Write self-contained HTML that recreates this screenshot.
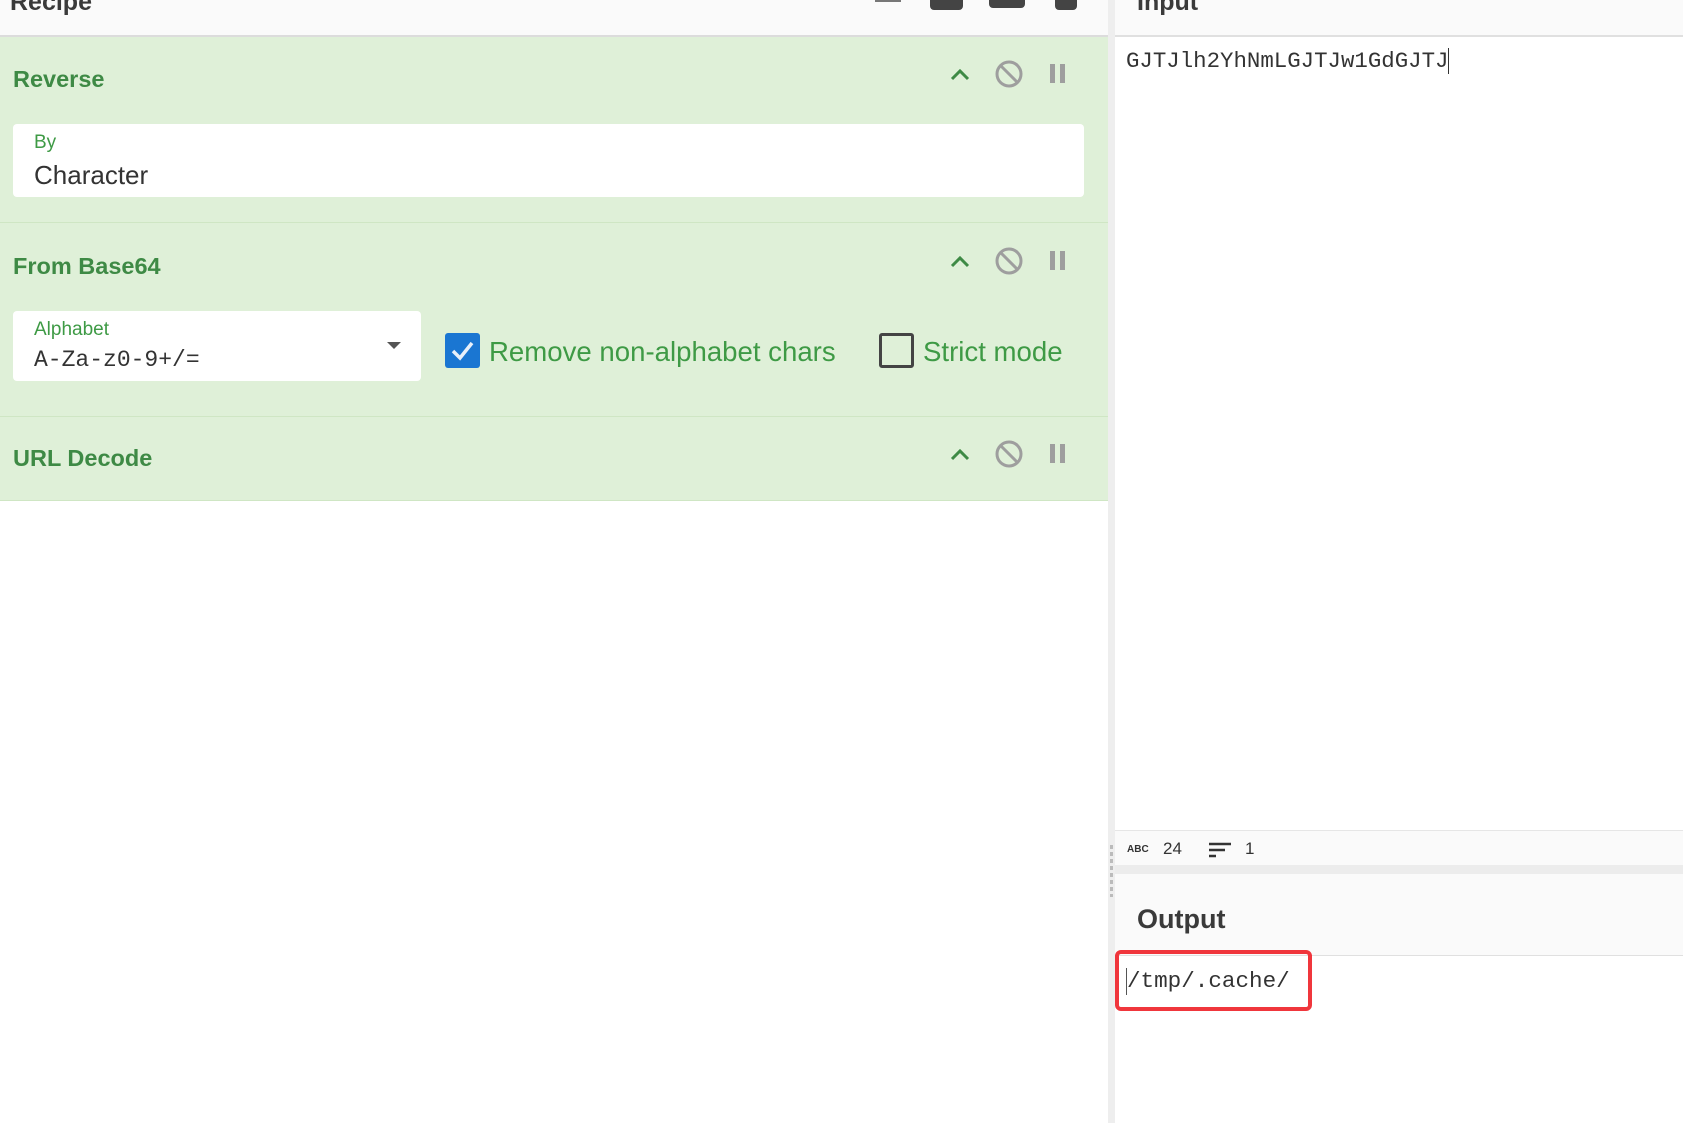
<!DOCTYPE html>
<html><head><meta charset="utf-8"><style>
*{margin:0;padding:0;box-sizing:border-box}
body{width:1683px;height:1123px;overflow:hidden;background:#fff;font-family:"Liberation Sans",sans-serif;position:relative}
.a{position:absolute}
.mono{font-family:"Liberation Mono","DejaVu Sans Mono",monospace}
.t{color:#3e8a45;font-weight:bold;font-size:23.5px}
.lbl{color:#3e9a45;font-size:19px}
</style></head><body>
<div class="a" style="left:0;top:0;width:1108px;height:37px;background:#fafafa;border-bottom:2px solid #dcdcdc"></div>
<div class="a" style="left:10px;top:-12px;font-size:25px;font-weight:bold;color:#3a3a3a">Recipe</div>
<div class="a" style="left:930px;top:-6px;width:33px;height:16px;background:#444;border-radius:4px"></div>
<div class="a" style="left:989px;top:-6px;width:36px;height:14px;background:#444;border-radius:4px"></div>
<div class="a" style="left:1055px;top:-6px;width:22px;height:16px;background:#444;border-radius:4px"></div>
<div class="a" style="left:875px;top:-6px;width:26px;height:8px;border-bottom:2px solid #777"></div>
<div class="a" style="left:0;top:37px;width:1108px;height:464px;background:#dff0d8"></div>
<div class="a" style="left:0;top:222px;width:1108px;height:1px;background:#cfe6c4"></div>
<div class="a" style="left:0;top:416px;width:1108px;height:1px;background:#cfe6c4"></div>
<div class="a" style="left:0;top:500px;width:1108px;height:1px;background:#cfe6c4"></div>
<div class="a t" style="left:13px;top:66px">Reverse</div>
<div class="a t" style="left:13px;top:253px">From Base64</div>
<div class="a t" style="left:13px;top:445px">URL Decode</div>
<div class="a" style="left:13px;top:124px;width:1071px;height:73px;background:#fff;border-radius:4px"></div>
<div class="a lbl" style="left:34px;top:132px">By</div>
<div class="a" style="left:34px;top:160px;font-size:26px;color:#333">Character</div>
<div class="a" style="left:13px;top:311px;width:408px;height:70px;background:#fff;border-radius:4px"></div>
<div class="a lbl" style="left:34px;top:319px">Alphabet</div>
<div class="a mono" style="left:34px;top:347px;font-size:23px;color:#333">A-Za-z0-9+/=</div>
<div class="a" style="left:387px;top:342px;border-left:7px solid transparent;border-right:7px solid transparent;border-top:7px solid #555"></div>
<div class="a" style="left:445px;top:333px;width:35px;height:35px;background:#1a76d2;border-radius:3px"></div>
<svg class="a" style="left:445px;top:333px" width="35" height="35"><path d="M8 18 L15 25 L27 10" stroke="#e8f0fa" stroke-width="3.5" fill="none"/></svg>
<div class="a" style="left:489px;top:336px;font-size:27.6px;color:#3e9a45">Remove non-alphabet chars</div>
<div class="a" style="left:879px;top:333px;width:35px;height:35px;border:3px solid #444;border-radius:3px"></div>
<div class="a" style="left:923px;top:336px;font-size:27.6px;color:#3e9a45">Strict mode</div>
<svg class="a" style="left:0;top:0" width="1108" height="500">
<g id="ic">
<path d="M952 79 L960 71 L968 79" stroke="#3e8a45" stroke-width="3" fill="none"/>
<circle cx="1009" cy="74" r="12" stroke="#9e9e9e" stroke-width="3" fill="none"/>
<path d="M1001 66 L1017 82" stroke="#9e9e9e" stroke-width="3"/>
<rect x="1050" y="64" width="5" height="19" fill="#9e9e9e"/><rect x="1060" y="64" width="5" height="19" fill="#9e9e9e"/>
</g>
<use href="#ic" y="187"/>
<use href="#ic" y="380"/>
</svg>
<div class="a" style="left:1108px;top:0;width:7px;height:1123px;background:#eeeeee"></div>
<div class="a" style="left:1110px;top:845px;width:3px;height:52px;background:repeating-linear-gradient(#bbb 0 4px,transparent 4px 7px)"></div>
<div class="a" style="left:1115px;top:0;width:568px;height:37px;background:#fafafa;border-bottom:2px solid #e0e0e0"></div>
<div class="a" style="left:1137px;top:-12px;font-size:25px;font-weight:bold;color:#3a3a3a">Input</div>
<div class="a mono" style="left:1126px;top:48px;font-size:22.4px;color:#333">GJTJlh2YhNmLGJTJw1GdGJTJ<span style="display:inline-block;width:1px;height:26px;background:#333;vertical-align:middle"></span></div>
<div class="a" style="left:1115px;top:830px;width:568px;height:35px;background:#fafafa;border-top:1px solid #e6e6e6"></div>
<div class="a" style="left:1127px;top:844px;font-size:10px;font-weight:bold;color:#333">ABC</div>
<div class="a" style="left:1163px;top:839px;font-size:17px;color:#333">24</div>
<svg class="a" style="left:1209px;top:841px" width="24" height="18"><path d="M0 3H22M0 9H16M0 15H7" stroke="#333" stroke-width="2.5"/></svg>
<div class="a" style="left:1245px;top:839px;font-size:17px;color:#333">1</div>
<div class="a" style="left:1115px;top:865px;width:568px;height:9px;background:#ececec"></div>
<div class="a" style="left:1115px;top:874px;width:568px;height:82px;background:#fafafa;border-bottom:1px solid #e0e0e0"></div>
<div class="a" style="left:1137px;top:904px;font-size:27px;font-weight:bold;color:#3a3a3a">Output</div>
<div class="a" style="left:1115px;top:950px;width:197px;height:61px;border:4px solid #f0363c;border-radius:6px"></div>
<div class="a" style="left:1126px;top:968px;width:1px;height:27px;background:#555"></div>
<div class="a mono" style="left:1127px;top:968px;font-size:22.6px;color:#333">/tmp/.cache/</div>
</body></html>
